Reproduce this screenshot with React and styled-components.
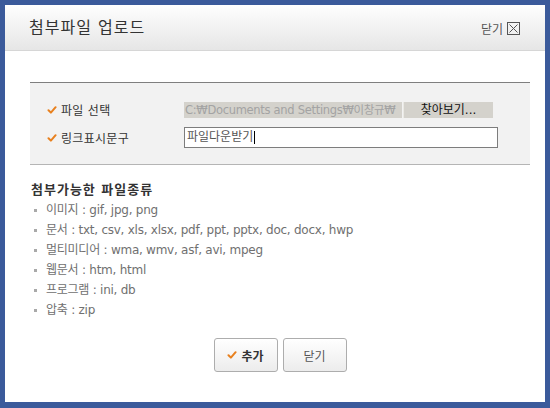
import React from 'react';
import styled, { createGlobalStyle } from 'styled-components';

const GlobalStyle = createGlobalStyle`
	html, body {
		margin: 0;
		padding: 0;
		background: #fff;
	}
	* {
		box-sizing: border-box;
	}
	body {
		font-family: "DejaVu Sans", "Noto Sans CJK KR", sans-serif;
		font-size: 12px;
		color: #555;
	}
`;

const fileTypes = [
	{ name: '이미지', exts: 'gif, jpg, png' },
	{ name: '문서', exts: 'txt, csv, xls, xlsx, pdf, ppt, pptx, doc, docx, hwp' },
	{ name: '멀티미디어', exts: 'wma, wmv, asf, avi, mpeg' },
	{ name: '웹문서', exts: 'htm, html' },
	{ name: '프로그램', exts: 'ini, db' },
	{ name: '압축', exts: 'zip' },
];

const Check = () => (
	<CheckIcon viewBox='0 0 10 10'>
		<path d='M1.5 5.2 L3.9 7.6 L8.6 2.2' fill='none' stroke='#e8801e' strokeWidth='2' strokeLinecap='round' strokeLinejoin='round' />
	</CheckIcon>
);

const CloseBox = () => (
	<BoxIcon viewBox='0 0 13 13'>
		<rect x='0.5' y='0.5' width='12' height='12' fill='none' stroke='#555' />
		<path d='M2.5 2.5 L10.5 10.5 M10.5 2.5 L2.5 10.5' stroke='#555' strokeWidth='1' />
	</BoxIcon>
);

const App = () => {
	return (
		<>
			<GlobalStyle />
			<Dialog>
				<Header>
					<Title>첨부파일 업로드</Title>
					<CloseLink>
						닫기 <CloseBox />
					</CloseLink>
				</Header>
				<Body>
					<FormBox>
						<FormRow>
							<Label><Check />파일 선택</Label>
							<FileField>
								<FilePath>C:₩Documents and Settings₩이창규₩</FilePath>
								<BrowseButton>찾아보기...</BrowseButton>
							</FileField>
						</FormRow>
						<FormRow>
							<Label><Check />링크표시문구</Label>
							<TextInput>파일다운받기<Caret /></TextInput>
						</FormRow>
					</FormBox>

					<SectionTitle>첨부가능한 파일종류</SectionTitle>
					<TypeList>
						{fileTypes.map((t) => (
							<TypeItem key={t.name}>{t.name} : {t.exts}</TypeItem>
						))}
					</TypeList>

					<Buttons>
						<Button><Check />추가</Button>
						<Button>닫기</Button>
					</Buttons>
				</Body>
			</Dialog>
		</>
	);
};

const Dialog = styled.div`
	width: 550px;
	height: 408px;
	border: 5px solid #3b5a9b;
	border-bottom-width: 6px;
	background: #fff;
	display: flex;
	flex-direction: column;
`;

const Header = styled.div`
	height: 46px;
	display: flex;
	align-items: center;
	justify-content: space-between;
	padding: 0 25px 0 24px;
	background: linear-gradient(#fefefe, #e6e6e6);
	border-bottom: 1px solid #d6d6d6;
`;

const Title = styled.h1`
	margin: 0;
	font-size: 16px;
	font-weight: normal;
	letter-spacing: 1px;
	color: #333;
	line-height: 20px;
	padding-top: 1px;
`;

const CloseLink = styled.span`
	display: flex;
	align-items: center;
	gap: 4px;
	font-size: 12px;
	color: #555;
	padding-top: 1px;
`;

const BoxIcon = styled.svg`
	width: 13px;
	height: 13px;
`;

const CheckIcon = styled.svg`
	width: 10px;
	height: 10px;
	margin-right: 4px;
	flex: none;
`;

const Body = styled.div`
	flex: 1;
	padding: 31px 15px 0 25px;
	display: flex;
	flex-direction: column;
`;

const FormBox = styled.div`
	background: #f2f2f2;
	border-top: 1px solid #7f7f7f;
	border-bottom: 1px solid #b5b5b5;
	height: 83px;
	padding: 18px 0 0 17px;
	display: flex;
	flex-direction: column;
	gap: 9px;
`;

const FormRow = styled.div`
	display: flex;
	align-items: center;
	height: 17px;
	&:last-child {
		height: 21px;
	}
`;

const Label = styled.div`
	width: 136px;
	display: flex;
	align-items: center;
	font-size: 12px;
	letter-spacing: 0.3px;
	color: #333;
`;

const FileField = styled.div`
	display: flex;
	height: 16px;
	margin-left: 1px;
`;

const FilePath = styled.div`
	width: 218px;
	background: #d4d2cc;
	color: #a3a3a3;
	font-size: 11.5px;
	letter-spacing: -0.3px;
	line-height: 16px;
	padding-left: 1px;
	white-space: nowrap;
	overflow: hidden;
`;

const BrowseButton = styled.div`
	width: 90px;
	margin-left: 1px;
	background: #d4d2cc;
	color: #111;
	font-size: 12px;
	line-height: 16px;
	text-align: center;
	border-left: 1px solid #eae9e4;
`;

const TextInput = styled.div`
	width: 314px;
	height: 21px;
	margin-left: 1px;
	border: 1px solid #7d7d7d;
	background: #fff;
	color: #555;
	font-size: 12px;
	line-height: 19px;
	padding-left: 2px;
	display: flex;
	align-items: center;
`;

const Caret = styled.span`
	display: inline-block;
	width: 1px;
	height: 13px;
	background: #000;
	margin-left: 1px;
`;

const SectionTitle = styled.h2`
	margin: 16px 0 0 1px;
	font-size: 13px;
	font-weight: bold;
	letter-spacing: 1px;
	color: #333;
	line-height: 18px;
`;

const TypeList = styled.ul`
	list-style: none;
	margin: 1px 0 0;
	padding: 0;
`;

const TypeItem = styled.li`
	position: relative;
	padding-left: 16px;
	line-height: 20px;
	font-size: 12px;
	letter-spacing: -0.25px;
	color: #707070;
	&::before {
		content: '';
		position: absolute;
		left: 4px;
		top: 9px;
		width: 3px;
		height: 3px;
		background: #a9a9a9;
	}
`;

const Buttons = styled.div`
	display: flex;
	justify-content: center;
	gap: 5px;
	margin-top: 18px;
`;

const Button = styled.div`
	width: 64px;
	height: 34px;
	border: 1px solid #adadad;
	border-radius: 3px;
	background: linear-gradient(#ffffff, #ececec);
	display: flex;
	align-items: center;
	justify-content: center;
	font-size: 12px;
	font-weight: bold;
	color: #333;
	&:last-child {
		font-weight: normal;
		color: #555;
	}
`;

export default App;
